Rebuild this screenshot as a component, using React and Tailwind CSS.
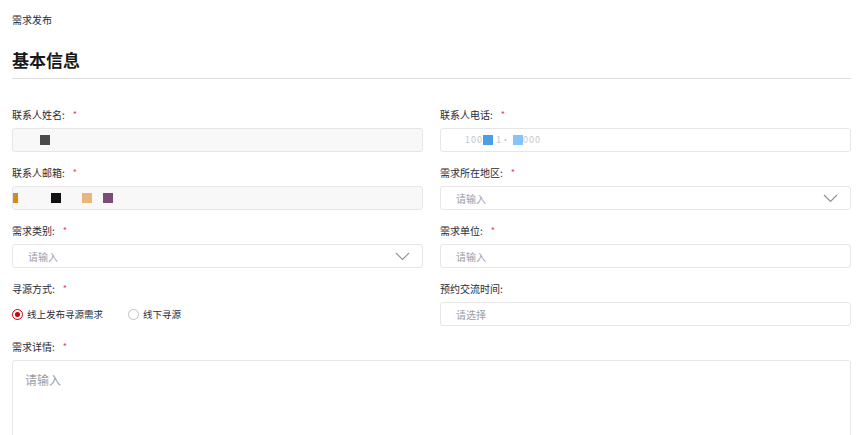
import React from 'react';

const font = { fontFamily: '"Noto Sans CJK SC", "Noto Sans", sans-serif' };

const Label = ({ text, required }) => (
  <div className="h-[14px] mb-[6px] flex items-center text-[10px] leading-[14px] text-[#252b3a]">
    <span>{text}:</span>
    {required && <span className="ml-[8px] text-[#e54545] text-[9px]">*</span>}
  </div>
);

const Chevron = () => (
  <svg width="15" height="9" viewBox="0 0 15 9" className="mr-[12px]">
    <path d="M1 1 L7.5 7.5 L14 1" fill="none" stroke="#8a8e99" strokeWidth="1.1" />
  </svg>
);

const Input = ({ placeholder, select, disabled, children }) => (
  <div
    className={`h-[24px] rounded-[3px] border border-[#e6e6e6] flex items-center justify-between ${
      disabled ? 'bg-[#f8f8f8]' : 'bg-white'
    }`}
  >
    {children ? (
      children
    ) : (
      <span className="pl-[15px] text-[10px] text-[#9a9ea8]">{placeholder}</span>
    )}
    {select && <Chevron />}
  </div>
);

const Block = ({ c, w = 10 }) => (
  <span className="inline-block h-[10px]" style={{ width: w, background: c }} />
);

export default function App() {
  return (
    <div className="w-[865px] h-[435px] overflow-hidden bg-white pl-[12px] pr-[14px] pt-[13px]" style={font}>
      <div className="text-[10px] leading-[14px] text-[#252b3a]">需求发布</div>
      <div className="mt-[21px] pb-[6px] border-b border-[#dcdcdc] text-[17px] leading-[24px] font-bold text-[#191919]">
        基本信息
      </div>

      <div className="mt-[29px] grid grid-cols-2 gap-x-[17px] gap-y-[14px]">
        <div>
          <Label text="联系人姓名" required />
          <Input disabled>
            <div className="flex items-center pl-[27px]">
              <Block c="#4a4a4a" />
            </div>
          </Input>
        </div>
        <div>
          <Label text="联系人电话" required />
          <Input>
            <div className="flex items-center pl-[24px] text-[9px] text-[#c4c6cc]">
              <span className="tracking-[1px]">100</span>
              <Block c="#4a9de6" />
              <span className="px-[3px]">1·</span>
              <Block c="#86c3fb" />
              <span className="tracking-[1px]">000</span>
            </div>
          </Input>
        </div>

        <div>
          <Label text="联系人邮箱" required />
          <Input disabled>
            <div className="flex items-center">
              <Block c="#d38b14" w={5} />
              <span className="w-[33px]" />
              <Block c="#111111" />
              <span className="w-[21px]" />
              <Block c="#e8b57b" />
              <span className="w-[11px]" />
              <Block c="#7b4c77" />
            </div>
          </Input>
        </div>
        <div>
          <Label text="需求所在地区" required />
          <Input placeholder="请输入" select />
        </div>

        <div>
          <Label text="需求类别" required />
          <Input placeholder="请输入" select />
        </div>
        <div>
          <Label text="需求单位" required />
          <Input placeholder="请输入" />
        </div>

        <div>
          <Label text="寻源方式" required />
          <div className="h-[24px] flex items-center text-[9.5px] text-[#252b3a]">
            <span className="w-[11px] h-[11px] rounded-full border border-[#c7000b] flex items-center justify-center">
              <span className="w-[5px] h-[5px] rounded-full bg-[#c7000b]" />
            </span>
            <span className="ml-[4px]">线上发布寻源需求</span>
            <span className="ml-[25px] w-[11px] h-[11px] rounded-full border border-[#c2c2c2]" />
            <span className="ml-[4px]">线下寻源</span>
          </div>
        </div>
        <div>
          <Label text="预约交流时间" />
          <Input placeholder="请选择" />
        </div>

        <div className="col-span-2">
          <Label text="需求详情" required />
          <div className="h-[120px] rounded-[3px] border border-[#e6e6e6] pl-[12px] pt-[10px] text-[12px] text-[#9a9ea8]">
            请输入
          </div>
        </div>
      </div>
    </div>
  );
}
